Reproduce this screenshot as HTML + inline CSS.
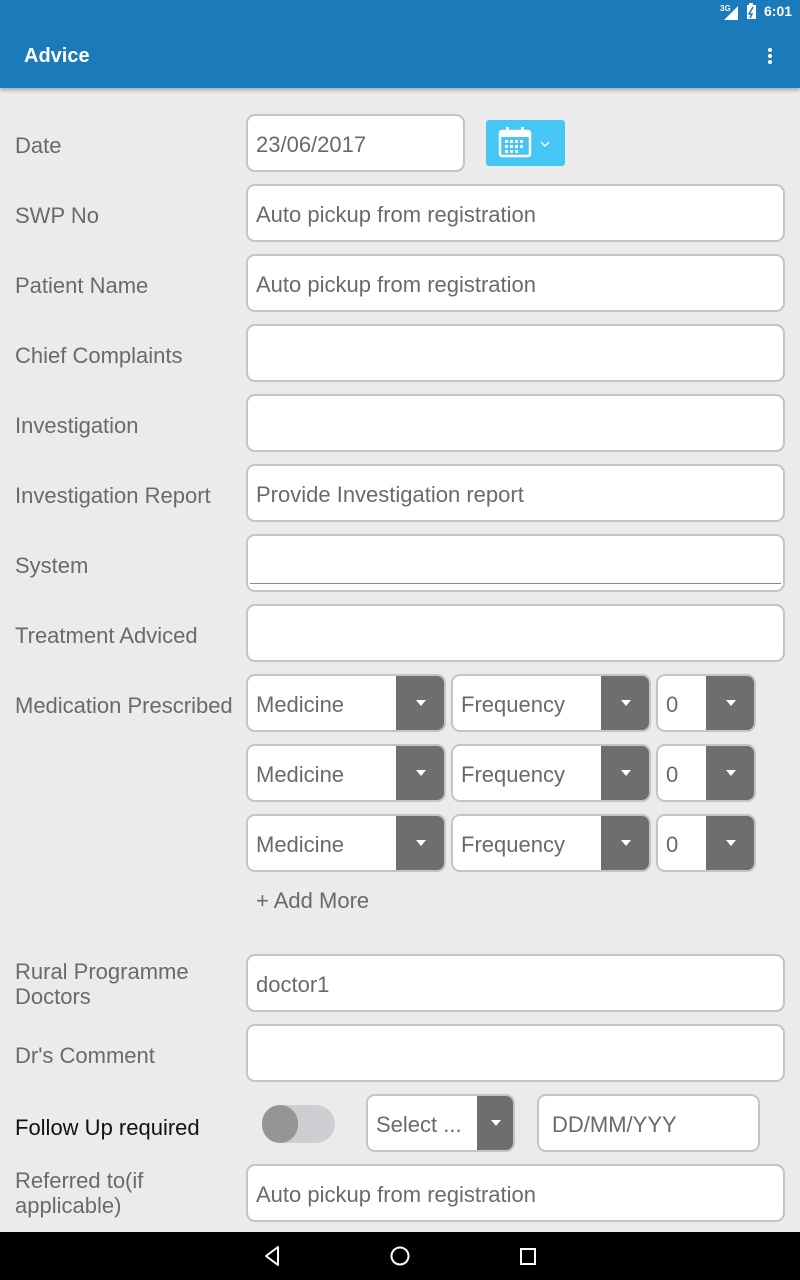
<!DOCTYPE html>
<html><head><meta charset="utf-8"><style>
*{box-sizing:border-box;margin:0;padding:0}
body{width:800px;height:1280px;background:#ebebeb;font-family:"Liberation Sans",sans-serif;position:relative;overflow:hidden;color:#666}
.abs{position:absolute}
.bar{left:0;top:0;width:800px;height:88px;background:#1a7aba;box-shadow:0 2px 4px rgba(0,0,0,.3)}
.lbl{position:absolute;left:15px;font-size:22px;color:#6a6a6a;line-height:25px}
.in{position:absolute;background:#fff;border:2px solid #c4c4c4;border-radius:9px;font-size:22px;color:#6a6a6a;padding-left:8px;padding-top:3px;display:flex;align-items:center;overflow:hidden}
.dk{position:absolute;top:-2px;bottom:-2px;right:-2px;background:#6e6e6e;border-radius:0 7px 7px 0}
.dk:after{content:"";position:absolute;left:50%;top:50%;margin:-3px 0 0 -5px;border-left:5px solid transparent;border-right:5px solid transparent;border-top:6px solid #fff}
</style></head><body>
<div class="abs bar"></div>
<div class="abs" style="left:720px;top:4px;color:#fff;font-size:8px;font-weight:bold">3G</div>
<svg class="abs" style="left:722px;top:4px" width="16" height="16"><polygon points="16,2 16,16 2,16" fill="#fff"/></svg>
<svg class="abs" style="left:746px;top:3px" width="12" height="16"><rect x="3" y="0" width="4" height="2" fill="#fff"/><rect x="1" y="2" width="9" height="14" fill="#fff"/><path d="M7 4 L3 11 L6 11 L4 15" stroke="#1a7aba" fill="none" stroke-width="1.5"/></svg>
<div class="abs" style="left:764px;top:3px;color:#fff;font-size:14px;font-weight:bold">6:01</div>
<div class="abs" style="left:24px;top:45px;color:#fff;font-size:20px;font-weight:bold">Advice</div>
<div class="abs" style="left:768px;top:48px;width:4px;height:4px;background:#fff;border-radius:2px;box-shadow:0 6px 0 #fff,0 12px 0 #fff"></div>

<div class="in" style="left:246px;top:114px;width:219px;height:58px">23/06/2017</div>
<div class="abs" style="left:486px;top:120px;width:79px;height:46px;background:#45c6f5;border-radius:3px"></div>
<svg class="abs" style="left:498px;top:126px" width="34" height="32"><rect x="2" y="5" width="30" height="25" rx="2" fill="none" stroke="#fff" stroke-width="2.5"/><rect x="2" y="5" width="30" height="6" fill="#fff"/><rect x="8" y="1" width="3" height="7" fill="#fff"/><rect x="23" y="1" width="3" height="7" fill="#fff"/><g fill="#fff"><rect x="7" y="14" width="3" height="3"/><rect x="12" y="14" width="3" height="3"/><rect x="17" y="14" width="3" height="3"/><rect x="22" y="14" width="3" height="3"/><rect x="7" y="19" width="3" height="3"/><rect x="12" y="19" width="3" height="3"/><rect x="17" y="19" width="3" height="3"/><rect x="22" y="19" width="3" height="3"/><rect x="7" y="24" width="3" height="3"/><rect x="12" y="24" width="3" height="3"/><rect x="17" y="24" width="3" height="3"/></g></svg>
<svg class="abs" style="left:540px;top:140px" width="10" height="8"><path d="M1 2 L5 6 L9 2" stroke="#fff" stroke-width="1.5" fill="none"/></svg>

<div class="lbl" style="top:133px">Date</div>
<div class="lbl" style="top:203px">SWP No</div>
<div class="in" style="left:246px;top:184px;width:539px;height:58px">Auto pickup from registration</div>
<div class="lbl" style="top:273px">Patient Name</div>
<div class="in" style="left:246px;top:254px;width:539px;height:58px">Auto pickup from registration</div>
<div class="lbl" style="top:343px">Chief Complaints</div>
<div class="in" style="left:246px;top:324px;width:539px;height:58px"></div>
<div class="lbl" style="top:413px">Investigation</div>
<div class="in" style="left:246px;top:394px;width:539px;height:58px"></div>
<div class="lbl" style="top:483px">Investigation Report</div>
<div class="in" style="left:246px;top:464px;width:539px;height:58px">Provide Investigation report</div>
<div class="lbl" style="top:553px">System</div>
<div class="in" style="left:246px;top:534px;width:539px;height:58px"></div>
<div class="abs" style="left:250px;top:583px;width:531px;height:1px;background:#888"></div>
<div class="lbl" style="top:623px">Treatment Adviced</div>
<div class="in" style="left:246px;top:604px;width:539px;height:58px"></div>
<div class="lbl" style="top:693px">Medication Prescribed</div>

<div class="in" style="left:246px;top:674px;width:200px;height:58px">Medicine<div class="dk" style="width:50px"></div></div>
<div class="in" style="left:451px;top:674px;width:200px;height:58px">Frequency<div class="dk" style="width:50px"></div></div>
<div class="in" style="left:656px;top:674px;width:100px;height:58px">0<div class="dk" style="width:50px"></div></div>
<div class="in" style="left:246px;top:744px;width:200px;height:58px">Medicine<div class="dk" style="width:50px"></div></div>
<div class="in" style="left:451px;top:744px;width:200px;height:58px">Frequency<div class="dk" style="width:50px"></div></div>
<div class="in" style="left:656px;top:744px;width:100px;height:58px">0<div class="dk" style="width:50px"></div></div>
<div class="in" style="left:246px;top:814px;width:200px;height:58px">Medicine<div class="dk" style="width:50px"></div></div>
<div class="in" style="left:451px;top:814px;width:200px;height:58px">Frequency<div class="dk" style="width:50px"></div></div>
<div class="in" style="left:656px;top:814px;width:100px;height:58px">0<div class="dk" style="width:50px"></div></div>
<div class="lbl" style="left:256px;top:888px">+ Add More</div>

<div class="lbl" style="top:959px">Rural Programme<br>Doctors</div>
<div class="in" style="left:246px;top:954px;width:539px;height:58px">doctor1</div>
<div class="lbl" style="top:1043px">Dr's Comment</div>
<div class="in" style="left:246px;top:1024px;width:539px;height:58px"></div>
<div class="lbl" style="top:1115px;color:#111">Follow Up required</div>
<div class="abs" style="left:262px;top:1105px;width:73px;height:38px;background:#cfcdd2;border-radius:19px"></div>
<div class="abs" style="left:262px;top:1105px;width:36px;height:38px;background:#959595;border-radius:19px"></div>
<div class="in" style="left:366px;top:1094px;width:149px;height:58px">Select ...<div class="dk" style="width:38px"></div></div>
<div class="in" style="left:537px;top:1094px;width:223px;height:58px;padding-left:13px">DD/MM/YYY</div>
<div class="lbl" style="top:1168px">Referred to(if<br>applicable)</div>
<div class="in" style="left:246px;top:1164px;width:539px;height:58px">Auto pickup from registration</div>

<div class="abs" style="left:0;top:1232px;width:800px;height:48px;background:#000"></div>
<svg class="abs" style="left:0;top:1232px" width="800" height="48"><path d="M278 15 L266 24 L278 33 Z" stroke="#fff" stroke-width="2" fill="none" stroke-linejoin="round"/><circle cx="400" cy="24" r="8.5" stroke="#fff" stroke-width="2" fill="none"/><rect x="521" y="17" width="14" height="15" stroke="#fff" stroke-width="2" fill="none"/></svg>
</body></html>
